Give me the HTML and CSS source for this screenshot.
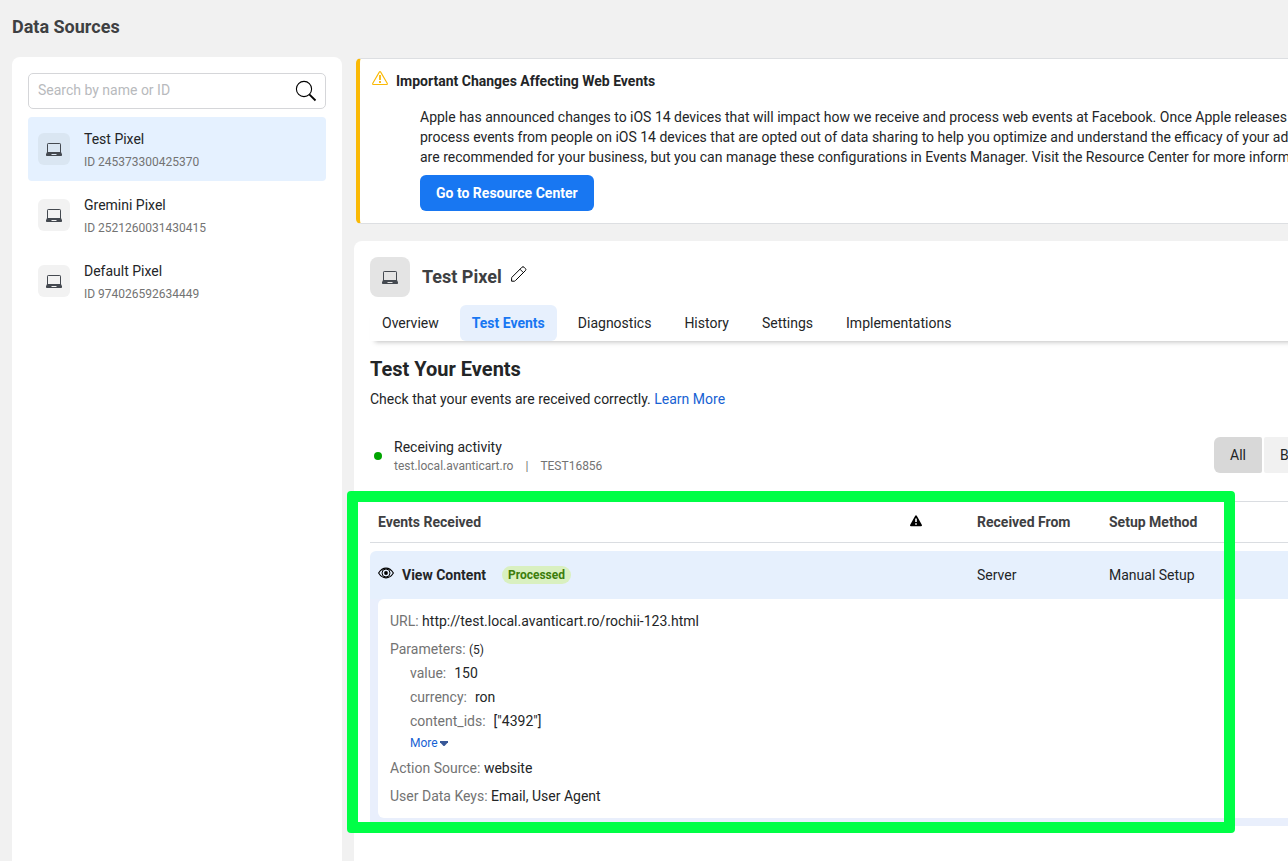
FILE: index.html
```html
<!DOCTYPE html>
<html lang="en">
<head>
  <meta charset="UTF-8">
  <meta name="viewport" content="width=device-width,initial-scale=1">
  <title>Data Sources</title>
  <link rel="stylesheet" href="styles.css">
</head>
<body>
  <!-- shared laptop icon -->
  <svg class="sprite" aria-hidden="true">
    <symbol id="laptop" viewBox="0 0 16 14">
      <path d="M1.5 10V2.2Q1.5 1.5 2.2 1.5H13.8Q14.5 1.5 14.5 2.2V10" fill="none" stroke="#444950"/>
      <path fill-rule="evenodd" d="M1 10H15L16 12.3V13.2Q16 14 15.2 14H.8Q0 14 0 13.2V12.3ZM5.5 12V13H10.5V12Z" fill="#444950"/>
    </symbol>
  </svg>

  <header class="page-header">
    <h1>Data Sources</h1>
  </header>

  <div class="layout">
    <aside class="sidebar">
      <form class="search">
        <input type="text" id="search" aria-label="Search by name or ID" placeholder="Search by name or ID">
        <button type="submit" aria-label="Search">
          <svg width="22" height="22" viewBox="0 0 22 22" fill="none" stroke="#000">
            <circle cx="9" cy="9" r="7.6" stroke-width="1.1"/>
            <path d="M14.3 14.3L20.5 20.5" stroke-width="1.8"/>
          </svg>
        </button>
      </form>
      <ul class="sources">
        <li><a class="source selected" href="#">
          <span class="source-icon"><svg width="16" height="14"><use href="#laptop"/></svg></span>
          <span class="source-text"><span class="source-name">Test Pixel</span><span class="source-id">ID 245373300425370</span></span>
        </a></li>
        <li><a class="source" href="#">
          <span class="source-icon"><svg width="16" height="14"><use href="#laptop"/></svg></span>
          <span class="source-text"><span class="source-name">Gremini Pixel</span><span class="source-id">ID 2521260031430415</span></span>
        </a></li>
        <li><a class="source" href="#">
          <span class="source-icon"><svg width="16" height="14"><use href="#laptop"/></svg></span>
          <span class="source-text"><span class="source-name">Default Pixel</span><span class="source-id">ID 974026592634449</span></span>
        </a></li>
      </ul>
    </aside>

    <main class="main">
      <section class="notice">
        <div class="notice-title">
          <svg width="16" height="14" viewBox="0 0 16 14" fill="none" stroke="#fab905">
            <path d="M7.3 1.1Q8 0 8.7 1.1L15.2 12.3Q15.7 13.5 14.6 13.5H1.4Q.3 13.5.8 12.3Z" stroke-width="1.1"/>
            <path d="M8 4V9M8 10V12" stroke-width="1.8"/>
          </svg>
          <h2>Important Changes Affecting Web Events</h2>
        </div>
        <div class="notice-body">
          <p>Apple has announced changes to iOS 14 devices that will impact how we receive and process web events at Facebook. Once Apple releases<br>
            process events from people on iOS 14 devices that are opted out of data sharing to help you optimize and understand the efficacy of your ads<br>
            are recommended for your business, but you can manage these configurations in Events Manager. Visit the Resource Center for more information</p>
          <button class="primary" type="button">Go to Resource Center</button>
        </div>
      </section>

      <section class="panel">
        <div class="panel-header">
          <span class="panel-icon"><svg width="16" height="14"><use href="#laptop"/></svg></span>
          <h2>Test Pixel</h2>
          <button class="edit" type="button" aria-label="Edit name">
            <svg width="16" height="16" viewBox="0 0 16 16" fill="none" stroke="#000" stroke-linejoin="round">
              <path d="M.6 15.2V12.2Q.6 11.6 1 11.2L11 1.2Q12 .2 13 1.2L14.4 2.6Q15.4 3.6 14.4 4.6L4.4 14.6Q4 15.2 3.4 15.2Z"/>
              <path d="M9 3.2L12.4 6.6" stroke-width=".9"/>
            </svg>
          </button>
        </div>

        <nav class="tabs">
          <a href="#">Overview</a>
          <a class="active" href="#">Test Events</a>
          <a href="#">Diagnostics</a>
          <a href="#">History</a>
          <a href="#">Settings</a>
          <a href="#">Implementations</a>
        </nav>

        <h3>Test Your Events</h3>
        <p class="intro">Check that your events are received correctly. <a href="#">Learn More</a></p>

        <div class="status">
          <span class="dot"></span>
          <div class="status-text">
            <div>Receiving activity</div>
            <div class="status-source"><span>test.local.avanticart.ro</span><span>|</span><span>TEST16856</span></div>
          </div>
          <div class="filter">
            <button class="on" type="button">All</button>
            <button type="button">Browser</button>
          </div>
        </div>

        <div class="events">
          <table>
            <colgroup>
              <col>
              <col class="col-warning">
              <col class="col-from">
              <col class="col-method">
            </colgroup>
            <thead>
              <tr>
                <th>Events Received</th>
                <th>
                  <svg width="12" height="14" viewBox="0 0 12 14" role="img" aria-label="Warnings">
                    <path fill-rule="evenodd" d="M5.2.8Q6-.4 6.8.8L11.8 9.8Q12.4 11.3 11 11.3H1Q-.4 11.3.2 9.8ZM5.2 3.5V7H6.8V3.5ZM5.2 8.2V9.8H6.8V8.2Z"/>
                  </svg>
                </th>
                <th>Received From</th>
                <th>Setup Method</th>
              </tr>
            </thead>
            <tbody>
              <tr class="event">
                <td>
                  <div class="event-name">
                    <svg width="16" height="16" viewBox="0 0 16 16" fill="none" stroke="#000">
                      <path d="M.6 6Q3.6 1.1 8 1.1T15.4 6Q12.4 10.9 8 10.9T.6 6Z" stroke-width="1.1"/>
                      <circle cx="8" cy="6" r="4" stroke-width="1"/>
                      <circle cx="8" cy="6" r="1.9" fill="#000" stroke="none"/>
                    </svg>
                    <strong>View Content</strong>
                    <span class="badge">Processed</span>
                  </div>
                </td>
                <td></td>
                <td>Server</td>
                <td>Manual Setup</td>
              </tr>
              <tr class="event-details">
                <td colspan="4">
                  <div class="details">
                    <p><span class="key">URL:</span> http://test.local.avanticart.ro/rochii-123.html</p>
                    <p><span class="key">Parameters:</span> <small>(5)</small></p>
                    <dl class="params">
                      <div><dt>value:</dt><dd>150</dd></div>
                      <div><dt>currency:</dt><dd>ron</dd></div>
                      <div><dt>content_ids:</dt><dd>["4392"]</dd></div>
                    </dl>
                    <button class="more" type="button">More
                      <svg width="8" height="5" viewBox="0 0 8 5"><path d="M0 0H8V1.2L4.5 5H3.5L0 1.2Z" fill="#385898"/></svg>
                    </button>
                    <p><span class="key">Action Source:</span> website</p>
                    <p><span class="key">User Data Keys:</span> Email, User Agent</p>
                  </div>
                </td>
              </tr>
            </tbody>
          </table>
          <div class="highlight"></div>
        </div>
      </section>
    </main>
  </div>
</body>
</html>
```

FILE: styles.css
```css
* { box-sizing: border-box; }
body {
  margin: 0;
  height: 100vh;
  display: flex;
  flex-direction: column;
  overflow: hidden;
  background: #f1f1f1;
  color: #232527;
  font: 14px/20px Roboto, "Liberation Sans", sans-serif;
}
h1, h2, h3, p, ul, dl, dd { margin: 0; }
button, input { font: inherit; color: inherit; }
button { border: 0; padding: 0; background: none; cursor: pointer; }
a { color: #1762d3; text-decoration: none; }
svg { display: block; flex: none; }
.sprite { position: absolute; width: 0; height: 0; }

.page-header { padding: 15px 12px 18px; }
.page-header h1 { font-size: 18px; line-height: 24px; color: #3e4042; }

.layout { flex: 1; display: flex; gap: 12px; padding-left: 12px; min-height: 0; }

/* sidebar */
.sidebar { flex: 0 0 330px; padding: 16px; background: #fff; border-radius: 8px 8px 0 0; }
.search { display: flex; align-items: center; height: 36px; padding: 0 8px 0 9px; border: 1px solid #d5d6d9; border-radius: 5px; }
.search input { flex: 1; min-width: 0; padding: 0 0 2px; border: 0; outline: 0; background: none; }
.search input::placeholder { color: #b8babd; opacity: 1; }
.sources { list-style: none; margin-top: 8px; padding: 0; display: grid; gap: 2px; }
.source { display: flex; align-items: center; gap: 14px; height: 64px; padding: 0 10px; border-radius: 4px; color: #232527; }
.source.selected { background: #e5f1ff; }
.source-icon { display: grid; place-items: center; width: 32px; height: 32px; border-radius: 6px; background: #f2f2f2; }
.selected .source-icon { background: #dae6f2; }
.source-text { display: grid; padding: 12px 0 6px; }
.source-id { font-size: 12px; line-height: 26px; color: #737373; }

/* main column */
.main { flex: 1; min-width: 0; display: flex; flex-direction: column; }

.notice {
  margin: 1px 0 17px 2px;
  padding: 12px 0 12px 12px;
  border: 1px solid #dddfe2;
  border-left: 4px solid #fab905;
  border-right: 0;
  border-radius: 5px 0 0 5px;
  background: #fff;
}
.notice-title { display: flex; gap: 8px; }
.notice-title h2 { font-size: 14px; line-height: 20px; }
.notice-body { margin-top: 16px; padding-left: 48px; overflow: hidden; white-space: nowrap; }
.primary { height: 36px; margin-top: 8px; padding: 0 16px; border-radius: 6px; background: #1877f2; color: #fff; font-weight: bold; }

.panel { flex: 1; padding: 16px 0 0 16px; border-radius: 8px 0 0 0; background: #fff; }
.panel-header { display: flex; align-items: center; }
.panel-header h2 { margin-left: 12px; font-size: 18px; line-height: 24px; color: #3e4042; }
.panel-icon { display: grid; place-items: center; width: 40px; height: 40px; border-radius: 8px; background: #e4e4e4; }
.edit { margin-left: 9px; padding-bottom: 6px; }

/* tabs run past the right edge so the shadow does not taper off there */
.tabs { display: flex; gap: 9px; margin: 8px -16px 0 0; box-shadow: 0 6px 5px -5px rgba(0, 0, 0, 0.25); }
.tabs a { padding: 8px 12px; border-radius: 6px; color: #232527; }
.tabs .active { background: #e7f0fd; color: #1877f2; font-weight: bold; }

.panel h3 { margin-top: 16px; font-size: 20px; line-height: 24px; }
.intro { margin-top: 8px; }

.status { display: flex; margin-top: 28px; }
.dot { width: 8px; height: 8px; margin: 15px 12px 0 4px; border-radius: 50%; background: #00a400; }
.status-source { display: flex; gap: 12px; font-size: 12px; line-height: 18px; color: #737373; }
.filter { display: flex; gap: 2px; width: 74px; height: 36px; margin-left: auto; overflow: hidden; border-radius: 6px 0 0 6px; }
.filter button { flex: none; padding: 0 16px; border-radius: 2px; background: #f1f1f1; }
.filter .on { background: #d8d8d8; }

/* events table */
.events { position: relative; margin-top: 26px; }
.events table { width: 100%; table-layout: fixed; border-collapse: separate; border-spacing: 0; }
.col-warning { width: 67px; }
.col-from { width: 132px; }
.col-method { width: 187px; }
.events th, .event td { padding: 0 8px; text-align: left; }
.events th { height: 42px; border: solid #dadde1; border-width: 1px 0; color: #3e4042; }
.events tbody::before { content: ""; display: block; height: 8px; }
.event td { height: 48px; background: #e6f0fd; }
.event td:first-child { border-top-left-radius: 6px; }
.event-name { display: flex; align-items: center; gap: 8px; }
.badge { margin-left: 8px; padding: 1px 6px 0; border-radius: 9px; background: #d9f0c0; color: #3c7d0b; font-size: 12px; line-height: 17px; font-weight: bold; }

.event-details > td { padding: 0 0 8px 8px; background: #e9effc; }
.details { padding: 12px; border-radius: 6px 0 0 6px; background: #fff; }
.details p + p, .more + p { margin-top: 8px; }
.key, .params dt { color: #737373; }
.details small { font-size: 12px; line-height: 12px; }
.params { margin-top: 2px; padding-left: 20px; line-height: 24px; }
.params div { display: flex; gap: 8px; }
.more { display: flex; align-items: center; gap: 2px; margin-left: 20px; font-size: 12px; color: #1762d3; }
.details .more + p { margin-top: 5px; }

/* frame drawn over the table */
.highlight { position: absolute; top: -10px; right: 53px; bottom: -7px; left: -23px; border: 11px solid #00ff46; border-radius: 4px; pointer-events: none; }
```
